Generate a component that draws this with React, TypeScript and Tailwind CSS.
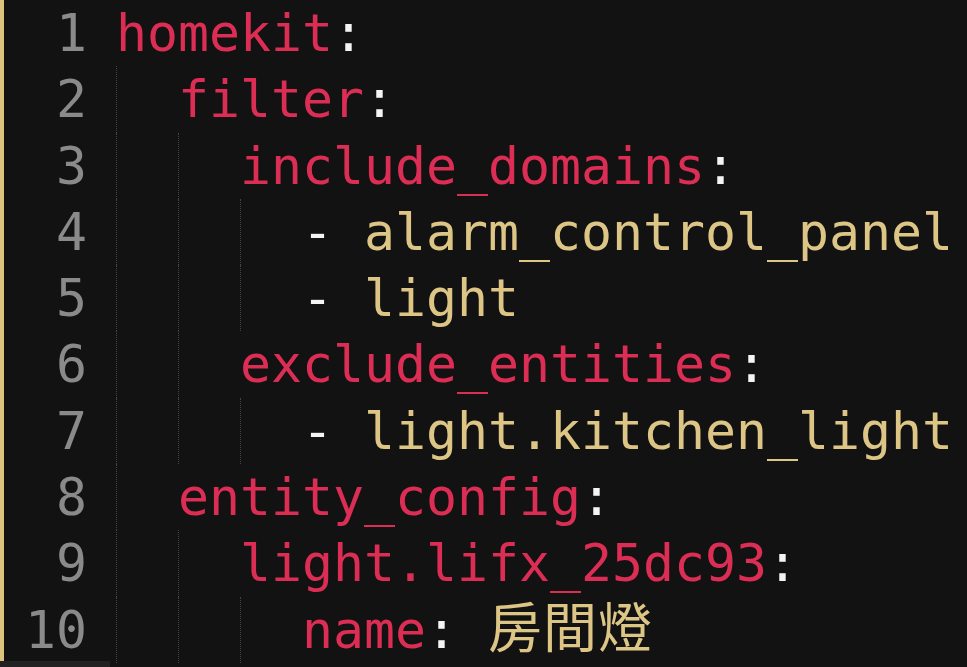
import React from "react";

type Tok = { t: string; c: "k" | "v" | "p" | "cjk" };
type Line = { indent: number; toks: Tok[] };

const lines: Line[] = [
  { indent: 0, toks: [{ t: "homekit", c: "k" }, { t: ":", c: "p" }] },
  { indent: 1, toks: [{ t: "filter", c: "k" }, { t: ":", c: "p" }] },
  { indent: 2, toks: [{ t: "include_domains", c: "k" }, { t: ":", c: "p" }] },
  { indent: 3, toks: [{ t: "- ", c: "p" }, { t: "alarm_control_panel", c: "v" }] },
  { indent: 3, toks: [{ t: "- ", c: "p" }, { t: "light", c: "v" }] },
  { indent: 2, toks: [{ t: "exclude_entities", c: "k" }, { t: ":", c: "p" }] },
  { indent: 3, toks: [{ t: "- ", c: "p" }, { t: "light.kitchen_light", c: "v" }] },
  { indent: 1, toks: [{ t: "entity_config", c: "k" }, { t: ":", c: "p" }] },
  { indent: 2, toks: [{ t: "light.lifx_25dc93", c: "k" }, { t: ":", c: "p" }] },
  { indent: 3, toks: [{ t: "name", c: "k" }, { t: ": ", c: "p" }, { t: "房間燈", c: "cjk" }] },
];

const color = {
  k: "text-[#dc2d55]",
  v: "text-[#dcc585]",
  p: "text-[#f4f4f4]",
  cjk: "text-[#dcc585] text-[54px] tracking-[1px]",
};

export default function App() {
  return (
    <div className="w-full h-screen bg-[#121212] overflow-hidden flex flex-col font-['DejaVu_Sans_Mono','Noto_Sans_CJK_TC',monospace] text-[51.5px] leading-[66.3px]">
      <div className="h-[661px] border-l-4 border-[#dcc27c] flex flex-col">
        {lines.map((ln, i) => (
          <div key={i} className="flex h-[66.3px] whitespace-pre">
            <div className="w-[112px] shrink-0 pr-[29px] text-right text-[#8a8a8a]">{i + 1}</div>
            <div className="flex items-stretch">
              {Array.from({ length: ln.indent }).map((_, j) => (
                <span key={j} className="w-[2ch] shrink-0 border-l border-dotted border-[#454545]" />
              ))}
              <span>
                {ln.toks.map((tk, j) => (
                  <span key={j} className={color[tk.c]}>
                    {tk.t}
                  </span>
                ))}
              </span>
            </div>
          </div>
        ))}
      </div>
      <div className="h-[6px] w-[110px] bg-[#222222]" />
    </div>
  );
}
